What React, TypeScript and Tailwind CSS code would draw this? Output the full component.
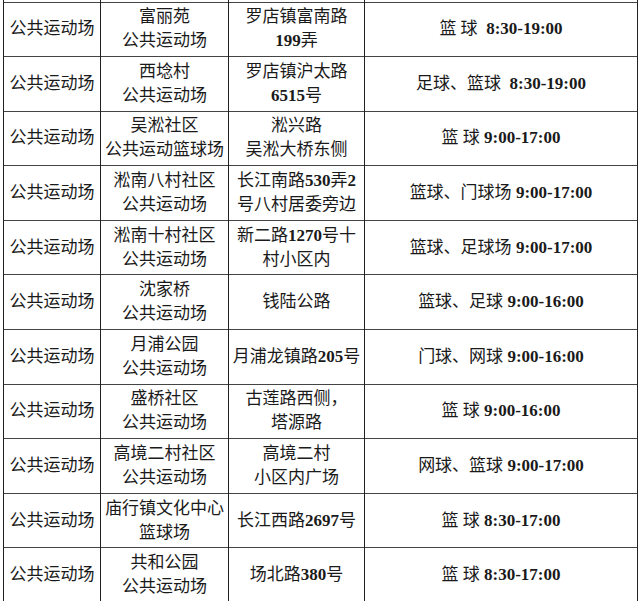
import React from "react";

type Row = { a: string; b: string[]; c: string[]; d: string };

const rows: Row[] = [
  { a: "公共运动场", b: ["富丽苑", "公共运动场"], c: ["罗店镇富南路", "199弄"], d: "篮 球  8:30-19:00" },
  { a: "公共运动场", b: ["西埝村", "公共运动场"], c: ["罗店镇沪太路", "6515号"], d: "足球、篮球  8:30-19:00" },
  { a: "公共运动场", b: ["吴淞社区", "公共运动篮球场"], c: ["淞兴路", "吴淞大桥东侧"], d: "篮 球 9:00-17:00" },
  { a: "公共运动场", b: ["淞南八村社区", "公共运动场"], c: ["长江南路530弄2", "号八村居委旁边"], d: "篮球、门球场 9:00-17:00" },
  { a: "公共运动场", b: ["淞南十村社区", "公共运动场"], c: ["新二路1270号十", "村小区内"], d: "篮球、足球场 9:00-17:00" },
  { a: "公共运动场", b: ["沈家桥", "公共运动场"], c: ["钱陆公路"], d: "篮球、足球 9:00-16:00" },
  { a: "公共运动场", b: ["月浦公园", "公共运动场"], c: ["月浦龙镇路205号"], d: "门球、网球 9:00-16:00" },
  { a: "公共运动场", b: ["盛桥社区", "公共运动场"], c: ["古莲路西侧，", "塔源路"], d: "篮 球 9:00-16:00" },
  { a: "公共运动场", b: ["高境二村社区", "公共运动场"], c: ["高境二村", "小区内广场"], d: "网球、篮球 9:00-17:00" },
  { a: "公共运动场", b: ["庙行镇文化中心", "篮球场"], c: ["长江西路2697号"], d: "篮 球 8:30-17:00" },
  { a: "公共运动场", b: ["共和公园", "公共运动场"], c: ["场北路380号"], d: "篮 球 8:30-17:00" },
];

function Txt({ s }: { s: string }) {
  const parts = s.split(/([0-9:\-]+)/);
  return (
    <>
      {parts.map((p, i) =>
        /[0-9]/.test(p) ? (
          <b key={i} className="font-bold">{p}</b>
        ) : (
          <span key={i}>{p}</span>
        )
      )}
    </>
  );
}

export default function App() {
  const cell = "border-x border-[#222] text-center align-middle p-0";
  return (
    <div
      className="w-[640px] h-[601px] overflow-hidden bg-white text-[#1a1a1a] pl-[3px]"
      style={{ fontFamily: '"Liberation Serif", "Noto Sans CJK SC", serif' }}
    >
      <table className="border-collapse table-fixed w-[634px] text-[17px] leading-[24px]">
        <colgroup>
          <col className="w-[97px]" />
          <col className="w-[128px]" />
          <col className="w-[136px]" />
          <col className="w-[273px]" />
        </colgroup>
        <tbody>
          <tr className="h-[2px]">
            <td className={cell}></td>
            <td className={cell}></td>
            <td className={cell}></td>
            <td className={cell}></td>
          </tr>
          {rows.map((r, i) => (
            <tr key={i} className="h-[54.6px] border-t border-[#444]">
              <td className={cell}>{r.a}</td>
              <td className={cell}>
                {r.b.map((l, j) => (
                  <div key={j}>
                    <Txt s={l} />
                  </div>
                ))}
              </td>
              <td className={cell}>
                {r.c.map((l, j) => (
                  <div key={j}>
                    <Txt s={l} />
                  </div>
                ))}
              </td>
              <td className={cell + " whitespace-pre"}>
                <Txt s={r.d} />
              </td>
            </tr>
          ))}
        </tbody>
      </table>
    </div>
  );
}
